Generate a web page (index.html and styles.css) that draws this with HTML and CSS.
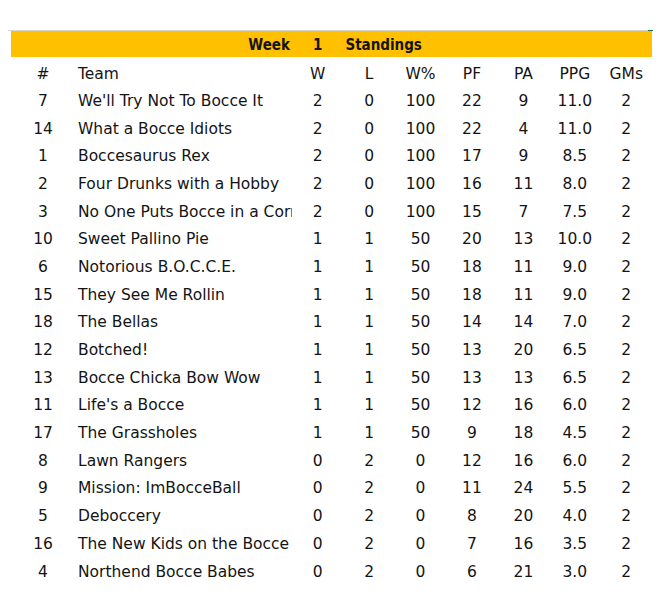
FILE: index.html
```html
<!DOCTYPE html>
<html>
<head>
<meta charset="utf-8">
<link rel="stylesheet" href="styles.css">
</head>
<body>
<div class="sheet">
  <div class="topline"><span class="gray"></span><span class="green"></span></div>
  <table class="standings">
    <colgroup>
      <col class="c-rank"><col class="c-team"><col class="c-num"><col class="c-num"><col class="c-num"><col class="c-num"><col class="c-num"><col class="c-num"><col class="c-num">
    </colgroup>
    <tr class="title">
      <td></td><td class="week">Week</td><td class="ctr">1</td><td class="stand" colspan="6">Standings</td>
    </tr>
    <tr class="head">
      <td class="ctr">#</td><td class="team">Team</td><td class="ctr">W</td><td class="ctr">L</td><td class="ctr">W%</td><td class="ctr">PF</td><td class="ctr">PA</td><td class="ctr">PPG</td><td class="ctr">GMs</td>
    </tr>
    <tr><td>7</td><td class="team">We'll Try Not To Bocce It</td><td>2</td><td>0</td><td>100</td><td>22</td><td>9</td><td>11.0</td><td>2</td></tr>
    <tr><td>14</td><td class="team">What a Bocce Idiots</td><td>2</td><td>0</td><td>100</td><td>22</td><td>4</td><td>11.0</td><td>2</td></tr>
    <tr><td>1</td><td class="team">Boccesaurus Rex</td><td>2</td><td>0</td><td>100</td><td>17</td><td>9</td><td>8.5</td><td>2</td></tr>
    <tr><td>2</td><td class="team">Four Drunks with a Hobby</td><td>2</td><td>0</td><td>100</td><td>16</td><td>11</td><td>8.0</td><td>2</td></tr>
    <tr><td>3</td><td class="team">No One Puts Bocce in a Corner</td><td>2</td><td>0</td><td>100</td><td>15</td><td>7</td><td>7.5</td><td>2</td></tr>
    <tr><td>10</td><td class="team">Sweet Pallino Pie</td><td>1</td><td>1</td><td>50</td><td>20</td><td>13</td><td>10.0</td><td>2</td></tr>
    <tr><td>6</td><td class="team">Notorious B.O.C.C.E.</td><td>1</td><td>1</td><td>50</td><td>18</td><td>11</td><td>9.0</td><td>2</td></tr>
    <tr><td>15</td><td class="team">They See Me Rollin</td><td>1</td><td>1</td><td>50</td><td>18</td><td>11</td><td>9.0</td><td>2</td></tr>
    <tr><td>18</td><td class="team">The Bellas</td><td>1</td><td>1</td><td>50</td><td>14</td><td>14</td><td>7.0</td><td>2</td></tr>
    <tr><td>12</td><td class="team">Botched!</td><td>1</td><td>1</td><td>50</td><td>13</td><td>20</td><td>6.5</td><td>2</td></tr>
    <tr><td>13</td><td class="team">Bocce Chicka Bow Wow</td><td>1</td><td>1</td><td>50</td><td>13</td><td>13</td><td>6.5</td><td>2</td></tr>
    <tr><td>11</td><td class="team">Life's a Bocce</td><td>1</td><td>1</td><td>50</td><td>12</td><td>16</td><td>6.0</td><td>2</td></tr>
    <tr><td>17</td><td class="team">The Grassholes</td><td>1</td><td>1</td><td>50</td><td>9</td><td>18</td><td>4.5</td><td>2</td></tr>
    <tr><td>8</td><td class="team">Lawn Rangers</td><td>0</td><td>2</td><td>0</td><td>12</td><td>16</td><td>6.0</td><td>2</td></tr>
    <tr><td>9</td><td class="team">Mission: ImBocceBall</td><td>0</td><td>2</td><td>0</td><td>11</td><td>24</td><td>5.5</td><td>2</td></tr>
    <tr><td>5</td><td class="team">Deboccery</td><td>0</td><td>2</td><td>0</td><td>8</td><td>20</td><td>4.0</td><td>2</td></tr>
    <tr><td>16</td><td class="team">The New Kids on the Bocce</td><td>0</td><td>2</td><td>0</td><td>7</td><td>16</td><td>3.5</td><td>2</td></tr>
    <tr><td>4</td><td class="team">Northend Bocce Babes</td><td>0</td><td>2</td><td>0</td><td>6</td><td>21</td><td>3.0</td><td>2</td></tr>
  </table>
</div>
</body>
</html>
```

FILE: styles.css
```css
html, body {
  margin: 0;
  padding: 0;
  background: #ffffff;
}

.sheet {
  padding-top: 30px;
  font-family: "DejaVu Sans", sans-serif;
  font-size: 15.5px;
  color: #141414;
}

.topline {
  display: flex;
  margin-left: 8px;
  width: 645px;
  height: 1px;
}

.topline .gray {
  flex: 1;
  background: #d6d6d6;
}

.topline .green {
  width: 5px;
  background: #1e7145;
}

.standings {
  margin-left: 11px;
  width: 641px;
  border-collapse: collapse;
  table-layout: fixed;
}

.c-rank { width: 64px; }
.c-team { width: 217px; }
.c-num { width: 51.43px; }

.standings td {
  padding: 0;
  text-align: center;
  white-space: nowrap;
  overflow: hidden;
  vertical-align: middle;
}

.standings td.team {
  text-align: left;
  padding-left: 3px;
  text-overflow: clip;
}

.title td {
  background: #ffc000;
  height: 24px;
  padding-top: 2px;
  font-family: "DejaVu Sans Condensed", "DejaVu Sans", sans-serif;
  font-weight: bold;
  font-size: 15px;
}

.title td.week {
  text-align: right;
  padding-right: 2px;
}

.title td.stand {
  text-align: left;
  padding-left: 2px;
}

.head td {
  height: 26px;
  padding-top: 4px;
}

.standings tr:not(.title):not(.head) td {
  height: 27.7px;
}
```
